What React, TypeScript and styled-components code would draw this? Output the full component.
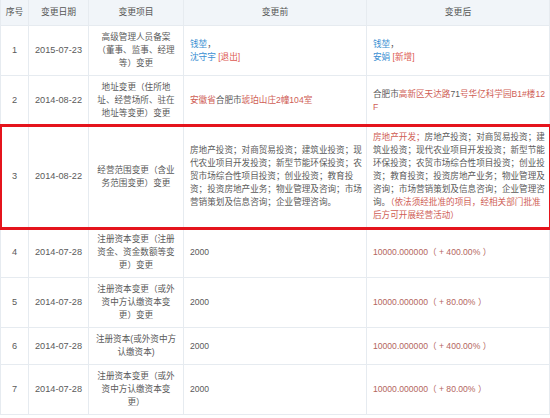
import React from 'react';
import styled, { createGlobalStyle } from 'styled-components';

const GlobalStyle = createGlobalStyle`
  html, body { margin: 0; padding: 0; background: #ffffff; }
  body {
    font-family: "Liberation Sans", "Noto Sans CJK SC", sans-serif;
    font-size: 8.6px;
    color: #555;
  }
`;

type Tone = 'plain' | 'link' | 'tag' | 'diff' | 'value';
type Seg = { t: string; c?: Tone };
type Line = string | Seg[];

interface RowData {
  no: string;
  date: string;
  item: string[];
  before: Line[];
  after: Line[];
  highlight?: boolean;
}

const COLS = '28px 60px 95px 183px 183px';

const Table = styled.div`
  width: 550px;
  border-left: 1px solid #e6ebf0;
  box-sizing: border-box;
`;

const Row = styled.div<{ $head?: boolean; $highlight?: boolean }>`
  display: grid;
  grid-template-columns: ${COLS};
  background: ${(p) => (p.$head ? '#f1f5f9' : '#ffffff')};
  height: ${(p) => (p.$head ? '26px' : 'auto')};
  position: relative;
  ${(p) =>
    p.$highlight
      ? `outline: 3px solid #e5141c; outline-offset: -1px; z-index: 2;`
      : ''}
`;

const Cell = styled.div<{ $align?: 'center' | 'left'; $head?: boolean }>`
  box-sizing: border-box;
  display: flex;
  flex-direction: column;
  justify-content: center;
  align-items: ${(p) => (p.$align === 'left' ? 'flex-start' : 'center')};
  text-align: ${(p) => (p.$align === 'left' ? 'left' : 'center')};
  padding: ${(p) => (p.$head ? '0 4px' : p.$align === 'left' ? '5px 5px 5px 6px' : '5px 4px')};
  border-right: 1px solid #e6ebf0;
  border-bottom: 1px solid #e6ebf0;
  line-height: 13px;
  color: ${(p) => (p.$head ? '#555' : '#5a5a5a')};
  font-size: ${(p) => (p.$head ? '8.8px' : '8.6px')};
  min-width: 0;
`;

const DateText = styled.span`
  font-size: 9.2px;
  color: #5a5a5a;
`;

const NoText = styled.span`
  font-size: 9.2px;
`;

const TextLine = styled.span`
  display: block;
  white-space: nowrap;
`;

const toneColor: Record<Tone, string> = {
  plain: 'inherit',
  link: '#3b8fd2',
  tag: '#dd5a52',
  diff: '#cf5e55',
  value: '#b4665e',
};

const Seg = styled.span<{ $tone: Tone }>`
  color: ${(p) => toneColor[p.$tone]};
`;

const rows: RowData[] = [
  {
    no: '1',
    date: '2015-07-23',
    item: ['高级管理人员备案', '（董事、监事、经理', '等）变更'],
    before: [
      [{ t: '钱堃', c: 'link' }, { t: '，' }],
      [{ t: '沈守宇', c: 'link' }, { t: ' ' }, { t: '[退出]', c: 'tag' }],
    ],
    after: [
      [{ t: '钱堃', c: 'link' }, { t: '，' }],
      [{ t: '安娟', c: 'link' }, { t: ' ' }, { t: '[新增]', c: 'tag' }],
    ],
  },
  {
    no: '2',
    date: '2014-08-22',
    item: ['地址变更（住所地', '址、经营场所、驻在', '地址等变更）变更'],
    before: [
      [
        { t: '安徽省', c: 'diff' },
        { t: '合肥市' },
        { t: '琥珀山庄2幢104室', c: 'diff' },
      ],
    ],
    after: [
      [
        { t: '合肥市' },
        { t: '高新区天达路', c: 'diff' },
        { t: '71' },
        { t: '号华亿科学园B1#楼12', c: 'diff' },
      ],
      [{ t: 'F', c: 'diff' }],
    ],
  },
  {
    no: '3',
    date: '2014-08-22',
    item: ['经营范围变更（含业', '务范围变更）变更'],
    highlight: true,
    before: [
      '房地产投资；对商贸易投资；建筑业投资；现',
      '代农业项目开发投资；新型节能环保投资；农',
      '贸市场综合性项目投资；创业投资；教育投',
      '资；投资房地产业务；物业管理及咨询；市场',
      '营销策划及信息咨询；企业管理咨询。',
    ],
    after: [
      [{ t: '房地产开发；', c: 'diff' }, { t: '房地产投资；对商贸易投资；建' }],
      '筑业投资；现代农业项目开发投资；新型节能',
      '环保投资；农贸市场综合性项目投资；创业投',
      '资；教育投资；投资房地产业务；物业管理及',
      '咨询；市场营销策划及信息咨询；企业管理咨',
      [{ t: '询。' }, { t: '（依法须经批准的项目，经相关部门批准', c: 'diff' }],
      [{ t: '后方可开展经营活动）', c: 'diff' }],
    ],
  },
  {
    no: '4',
    date: '2014-07-28',
    item: ['注册资本变更（注册', '资金、资金数额等变', '更）变更'],
    before: ['2000'],
    after: [[{ t: '10000.000000（ + 400.00% ）', c: 'value' }]],
  },
  {
    no: '5',
    date: '2014-07-28',
    item: ['注册资本变更（或外', '资中方认缴资本变', '更）变更'],
    before: ['2000'],
    after: [[{ t: '10000.000000（ + 80.00% ）', c: 'value' }]],
  },
  {
    no: '6',
    date: '2014-07-28',
    item: ['注册资本(或外资中方', '认缴资本)'],
    before: ['2000'],
    after: [[{ t: '10000.000000（ + 400.00% ）', c: 'value' }]],
  },
  {
    no: '7',
    date: '2014-07-28',
    item: ['注册资本变更（或外', '资中方认缴资本变', '更）'],
    before: ['2000'],
    after: [[{ t: '10000.000000（ + 80.00% ）', c: 'value' }]],
  },
];

function Lines({ lines }: { lines: Line[] }) {
  return (
    <>
      {lines.map((line, i) => (
        <TextLine key={i}>
          {typeof line === 'string'
            ? line
            : line.map((s, j) => (
                <Seg key={j} $tone={s.c ?? 'plain'}>
                  {s.t}
                </Seg>
              ))}
        </TextLine>
      ))}
    </>
  );
}

const headers = ['序号', '变更日期', '变更项目', '变更前', '变更后'];

export default function App() {
  return (
    <>
      <GlobalStyle />
      <Table>
        <Row $head>
          {headers.map((h) => (
            <Cell key={h} $head>
              {h}
            </Cell>
          ))}
        </Row>
        {rows.map((r) => (
          <Row key={r.no} $highlight={r.highlight}>
            <Cell>
              <NoText>{r.no}</NoText>
            </Cell>
            <Cell>
              <DateText>{r.date}</DateText>
            </Cell>
            <Cell>
              <Lines lines={r.item} />
            </Cell>
            <Cell $align="left">
              <Lines lines={r.before} />
            </Cell>
            <Cell $align="left">
              <Lines lines={r.after} />
            </Cell>
          </Row>
        ))}
      </Table>
    </>
  );
}
